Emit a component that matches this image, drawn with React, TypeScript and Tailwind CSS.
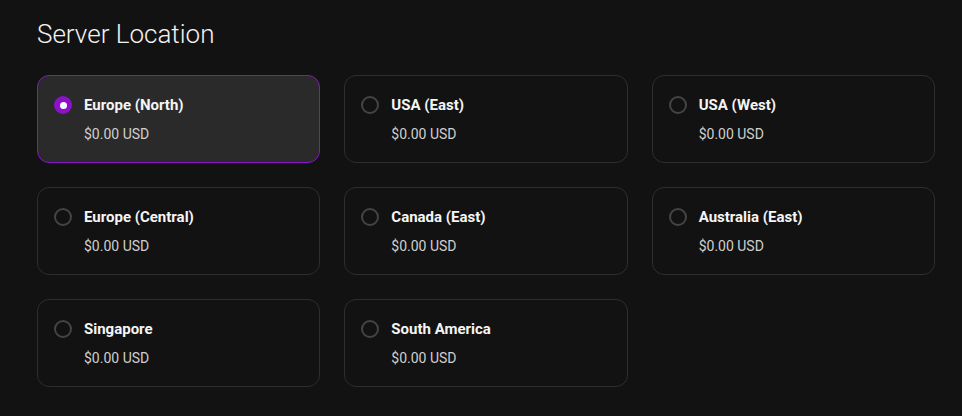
import { useState } from 'react'

const LOCATIONS = [
  'Europe (North)',
  'USA (East)',
  'USA (West)',
  'Europe (Central)',
  'Canada (East)',
  'Australia (East)',
  'Singapore',
  'South America',
]

export default function App() {
  const [selected, setSelected] = useState('Europe (North)')

  return (
    <div className="min-h-[416px] bg-[#121212] pl-[37px] pr-[27px] pt-[15px] font-['Roboto',sans-serif]">
      <h2 className="text-[26px] leading-[38px] font-light text-[#f2f2f2]">Server Location</h2>
      <div className="mt-[22px] grid grid-cols-3 gap-x-[24px] gap-y-[24px]">
        {LOCATIONS.map((name) => {
          const active = selected === name
          return (
            <button
              key={name}
              onClick={() => setSelected(name)}
              className={
                active
                  ? 'h-[88px] rounded-[12px] border border-[#8a12c9] bg-[#2a2a2a] pl-[16px] pt-[19px] text-left flex items-start gap-[12px]'
                  : 'h-[88px] rounded-[12px] border border-[#2e2e2e] bg-[#121212] pl-[16px] pt-[19px] text-left flex items-start gap-[12px]'
              }
            >
              {active ? (
                <span className="mt-[1px] w-[18px] h-[18px] rounded-full bg-[#8a12c9] flex items-center justify-center shrink-0">
                  <span className="w-[7px] h-[7px] rounded-full bg-white" />
                </span>
              ) : (
                <span className="mt-[1px] w-[18px] h-[18px] rounded-full border-2 border-[#444444] shrink-0" />
              )}
              <div className="flex flex-col">
                <span className="text-[15px] leading-[20px] font-bold text-[#f5f5f5]">{name}</span>
                <span className="mt-[10px] text-[14px] leading-[18px] text-[#cfcfcf]">$0.00 USD</span>
              </div>
            </button>
          )
        })}
      </div>
    </div>
  )
}
